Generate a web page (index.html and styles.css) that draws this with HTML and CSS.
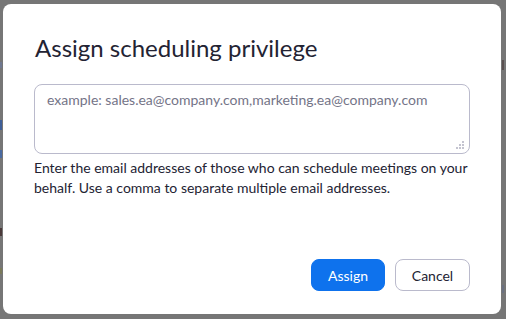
FILE: index.html
```html
<!DOCTYPE html>
<html>
<head>
<meta charset="utf-8">
<link rel="stylesheet" href="styles.css">
</head>
<body>
<div class="backdrop-marks">
  <span class="mark m1"></span>
  <span class="mark m2"></span>
  <span class="mark m3"></span>
  <span class="mark m4"></span>
  <span class="mark m5"></span>
  <span class="mark m6"></span>
  <span class="mark m7"></span>
</div>
<div class="dialog">
  <h1 class="title">Assign scheduling privilege</h1>
  <div class="field">
    <textarea class="emails" placeholder="example: sales.ea@company.com,marketing.ea@company.com"></textarea>
    <svg class="grip" width="9" height="9" viewBox="0 0 9 9">
      <rect x="6" y="0" width="2" height="2" fill="#c4c4d0"/>
      <rect x="3" y="3" width="2" height="2" fill="#c4c4d0"/>
      <rect x="6" y="3" width="2" height="2" fill="#c4c4d0"/>
      <rect x="0" y="6" width="2" height="2" fill="#c4c4d0"/>
      <rect x="3" y="6" width="2" height="2" fill="#c4c4d0"/>
      <rect x="6" y="6" width="2" height="2" fill="#c4c4d0"/>
    </svg>
  </div>
  <p class="help">Enter the email addresses of those who can schedule meetings on your behalf. Use a comma to separate multiple email addresses.</p>
  <div class="actions">
    <button class="btn primary">Assign</button>
    <button class="btn secondary">Cancel</button>
  </div>
</div>
</body>
</html>
```
FILE: styles.css
```css
html, body {
  margin: 0;
  height: 100%;
}
body {
  background: #767676;
  padding: 4px 5px 5px 3px;
  box-sizing: border-box;
  font-family: Lato, "Open Sans", sans-serif;
  position: relative;
  overflow: hidden;
}
.backdrop-marks .mark {
  position: absolute;
  width: 2px;
}
.m1 { left: 0; top: 62px; height: 6px; background: #6f7890; }
.m2 { left: 0; top: 120px; height: 10px; background: #3f5f98; }
.m3 { left: 0; top: 150px; height: 8px; background: #4a6aa0; }
.m4 { left: 0; top: 228px; height: 8px; background: #4a3a3a; }
.m5 { left: 0; top: 268px; height: 6px; background: #7a7a5a; }
.m6 { left: 502px; top: 60px; height: 10px; background: #5a5050; }
.m7 { left: 502px; top: 285px; height: 8px; background: #6a7080; }
.dialog {
  position: relative;
  height: 310px;
  box-sizing: border-box;
  background: #ffffff;
  border-radius: 8px;
  padding: 29px 31px 23px 31px;
  display: flex;
  flex-direction: column;
}
.title {
  margin: 0 0 21px 1px;
  font-size: 24px;
  line-height: 30px;
  font-weight: 400;
  color: #232333;
}
.field {
  position: relative;
  height: 70px;
}
.emails {
  display: block;
  width: 100%;
  height: 70px;
  box-sizing: border-box;
  margin: 0;
  border: 1px solid #babacc;
  border-radius: 8px;
  padding: 5px 12px;
  font-family: Lato, "Open Sans", sans-serif;
  font-size: 14px;
  line-height: 20px;
  color: #232333;
  resize: none;
  outline: none;
}
.emails::placeholder {
  color: #747487;
  opacity: 1;
}
.grip {
  position: absolute;
  right: 5px;
  bottom: 4px;
}
.help {
  margin: 4px 0 0 0;
  font-size: 14px;
  line-height: 20px;
  color: #232333;
}
.actions {
  margin-top: auto;
  display: flex;
  justify-content: flex-end;
  gap: 10px;
}
.btn {
  height: 32px;
  box-sizing: border-box;
  border-radius: 8px;
  font-family: Lato, "Open Sans", sans-serif;
  font-size: 14px;
  padding: 0;
  cursor: pointer;
}
.primary {
  width: 74px;
  background: #0e72ed;
  border: 1px solid #0e72ed;
  color: #ffffff;
}
.secondary {
  width: 75px;
  background: #ffffff;
  border: 1px solid #babacc;
  color: #232333;
}
```
